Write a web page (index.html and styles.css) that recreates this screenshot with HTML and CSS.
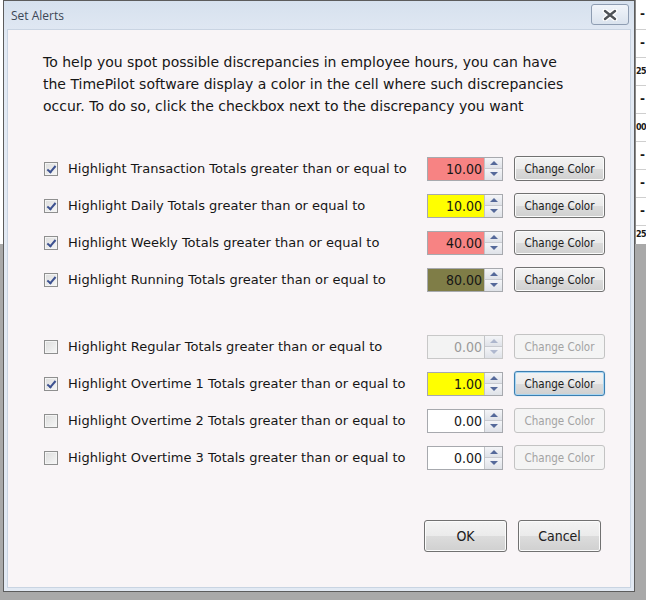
FILE: index.html
```
<!DOCTYPE html>
<html lang="en">
<head>
  <meta charset="UTF-8" />
  <title>Set Alerts</title>
  <link rel="stylesheet" href="styles.css">
</head>
<body>
  <div class="desk">
    <div class="window">
      <div class="titlebar">
        <span class="title">Set Alerts</span>
        <span class="close">
          <svg width="16" height="12" viewBox="0 0 16 12">
            <path d="M3 2 L13 10 M13 2 L3 10" stroke="#fff" stroke-width="5" stroke-linecap="round"/>
            <path d="M3 2 L13 10 M13 2 L3 10" stroke="#4e5257" stroke-width="2.4" stroke-linecap="round"/>
          </svg>
        </span>
      </div>

      <div class="content">
        <p class="intro">
          To help you spot possible discrepancies in employee hours, you can have<br>
          the TimePilot software display a color in the cell where such discrepancies<br>
          occur. To do so, click the checkbox next to the discrepancy you want
        </p>

        <div class="group">
          <div class="row">
            <span class="check on"></span>
            <span class="label">Highlight Transaction Totals greater than or equal to</span>
            <span class="num red"><span class="val">10.00</span><span class="spin"><i class="up"></i><i class="down"></i></span></span>
            <span class="btn">Change Color</span>
          </div>
          <div class="row">
            <span class="check on"></span>
            <span class="label">Highlight Daily Totals greater than or equal to</span>
            <span class="num yellow"><span class="val">10.00</span><span class="spin"><i class="up"></i><i class="down"></i></span></span>
            <span class="btn">Change Color</span>
          </div>
          <div class="row">
            <span class="check on"></span>
            <span class="label">Highlight Weekly Totals greater than or equal to</span>
            <span class="num red"><span class="val">40.00</span><span class="spin"><i class="up"></i><i class="down"></i></span></span>
            <span class="btn">Change Color</span>
          </div>
          <div class="row">
            <span class="check on"></span>
            <span class="label">Highlight Running Totals greater than or equal to</span>
            <span class="num olive"><span class="val">80.00</span><span class="spin"><i class="up"></i><i class="down"></i></span></span>
            <span class="btn">Change Color</span>
          </div>
        </div>

        <div class="group">
          <div class="row">
            <span class="check"></span>
            <span class="label">Highlight Regular Totals greater than or equal to</span>
            <span class="num disabled"><span class="val">0.00</span><span class="spin"><i class="up"></i><i class="down"></i></span></span>
            <span class="btn disabled">Change Color</span>
          </div>
          <div class="row">
            <span class="check on"></span>
            <span class="label">Highlight Overtime 1 Totals greater than or equal to</span>
            <span class="num yellow"><span class="val">1.00</span><span class="spin"><i class="up"></i><i class="down"></i></span></span>
            <span class="btn focus">Change Color</span>
          </div>
          <div class="row">
            <span class="check"></span>
            <span class="label">Highlight Overtime 2 Totals greater than or equal to</span>
            <span class="num"><span class="val">0.00</span><span class="spin"><i class="up"></i><i class="down"></i></span></span>
            <span class="btn disabled">Change Color</span>
          </div>
          <div class="row">
            <span class="check"></span>
            <span class="label">Highlight Overtime 3 Totals greater than or equal to</span>
            <span class="num"><span class="val">0.00</span><span class="spin"><i class="up"></i><i class="down"></i></span></span>
            <span class="btn disabled">Change Color</span>
          </div>
        </div>

        <div class="actions">
          <span class="btn big">OK</span>
          <span class="btn big">Cancel</span>
        </div>
      </div>
    </div>

    <div class="sheet">
      <div class="cell first">-</div>
      <div class="cell">-</div>
      <div class="cell small">25</div>
      <div class="cell">-</div>
      <div class="cell small">00</div>
      <div class="cell">-</div>
      <div class="cell">-</div>
      <div class="cell">-</div>
      <div class="cell last small">25</div>
    </div>
  </div>
</body>
</html>
```

FILE: styles.css
```
body {
  margin: 0;
  padding: 0;
  background: linear-gradient(#ffffff 0, #ffffff 244px, #a9a9a9 244px);
  font-family: "DejaVu Sans", sans-serif;
  color: #161616;
}
.desk {
  display: flex;
  height: 600px;
  overflow: hidden;
}
.window {
  margin-left: 3px;
  width: 632px;
  height: 592px;
  border: 1px solid #5c5c5c;
  background: linear-gradient(#d6e1ee, #e3eaf4 40px, #e2e9f3);
  padding: 0 3px 3px 3px;
  box-sizing: border-box;
  display: flex;
  flex-direction: column;
  flex-shrink: 0;
}
.titlebar {
  height: 28px;
  display: flex;
  justify-content: space-between;
  align-items: flex-start;
  padding: 0 2px 0 4px;
}
.title {
  margin-top: 6px;
  font-family: "Open Sans", sans-serif;
  font-size: 12px;
  color: #3c4756;
}
.close {
  margin-top: 3px;
  width: 36px;
  height: 19px;
  border: 1px solid #8e9db2;
  border-radius: 3px;
  background: linear-gradient(#f1f5fa, #dae3ee);
  display: flex;
  align-items: center;
  justify-content: center;
}
.content {
  flex: 1;
  background: #f9f5f7;
  border: 1px solid #c9d4e2;
  padding: 21px 0 0 0;
}
.intro {
  margin: 0 0 33px 35px;
  font-size: 14px;
  line-height: 22px;
}
.group {
  margin-bottom: 30px;
}
.row {
  height: 37px;
  display: flex;
  align-items: center;
  padding-left: 36px;
}
.check {
  width: 12px;
  height: 12px;
  border: 1px solid #8f8f8f;
  background: linear-gradient(135deg, #dcdcdc, #f7f7f7);
  box-shadow: inset 0 0 0 1px #f4f4f4;
  margin-right: 10px;
  position: relative;
}
.check.on::after {
  content: "";
  position: absolute;
  left: 4px;
  top: 1px;
  width: 3px;
  height: 7px;
  border: solid #3d5190;
  border-width: 0 2px 2px 0;
  transform: rotate(40deg);
}
.label {
  width: 359px;
  font-size: 13px;
}
.num {
  width: 76px;
  height: 24px;
  border: 1px solid #a7a9ae;
  box-sizing: border-box;
  display: flex;
  background: #ffffff;
}
.num .val {
  flex: 1;
  text-align: right;
  font-family: "DejaVu Sans Condensed", "DejaVu Sans", sans-serif;
  font-stretch: semi-condensed;
  font-size: 14px;
  line-height: 22px;
  padding-right: 2px;
}
.num.red .val { background: #f78383; }
.num.yellow .val { background: #ffff00; }
.num.olive .val { background: #7f7d47; }
.num.disabled {
  background: #f3f3f3;
  border-color: #c8c8c8;
}
.num.disabled .val { color: #9a9a9a; }
.spin {
  width: 17px;
  display: flex;
  flex-direction: column;
  border-left: 1px solid #c2c4c8;
}
.spin i {
  flex: 1;
  display: flex;
  align-items: center;
  justify-content: center;
  background: linear-gradient(#f4f5f8, #dfe2e8);
  border-bottom: 1px solid #c8cad0;
}
.spin i:last-child { border-bottom: none; }
.spin i::before {
  content: "";
  border-left: 4px solid transparent;
  border-right: 4px solid transparent;
}
.spin .up::before { border-bottom: 4px solid #55699a; }
.spin .down::before { border-top: 4px solid #55699a; }
.num.disabled .spin i::before { opacity: 0.4; }

.btn {
  margin-left: 11px;
  width: 91px;
  height: 25px;
  box-sizing: border-box;
  border: 1px solid #717171;
  border-radius: 3px;
  background: linear-gradient(#f3f3f3 0, #ebebeb 50%, #dcdcdc 51%, #d0d0d0 100%);
  box-shadow: inset 0 0 0 1px #fbfbfb;
  display: flex;
  align-items: center;
  justify-content: center;
  font-family: "DejaVu Sans Condensed", "DejaVu Sans", sans-serif;
  font-stretch: semi-condensed;
  font-size: 11.5px;
  color: #202020;
}
.btn.disabled {
  border-color: #c3c3c3;
  background: #f4f4f4;
  color: #a3a3a3;
  box-shadow: none;
}
.btn.focus {
  border-color: #3c7fb1;
  box-shadow: inset 0 0 0 1px #a9d6f2, 0 0 1px #7ab0d6;
}
.actions {
  display: flex;
  justify-content: flex-end;
  padding-right: 29px;
  margin-top: 44px;
}
.btn.big {
  width: 83px;
  height: 32px;
  font-size: 14px;
}

.sheet {
  flex: 1;
  overflow: hidden;
  background: #ffffff;
  height: 244px;
  border-left: 1px solid #8a8a8a;
}
.cell {
  height: 28px;
  border-bottom: 1px solid #cfcfcf;
  box-sizing: border-box;
  font-size: 12px;
  font-weight: bold;
  line-height: 27px;
  padding-left: 4px;
  white-space: nowrap;
}
.cell.small {
  padding-left: 0;
  font-size: 8px;
  letter-spacing: -0.5px;
}
.cell.first { height: 30px; line-height: 29px; }
.cell.last { height: 18px; line-height: 18px; border-bottom: none; }
```
